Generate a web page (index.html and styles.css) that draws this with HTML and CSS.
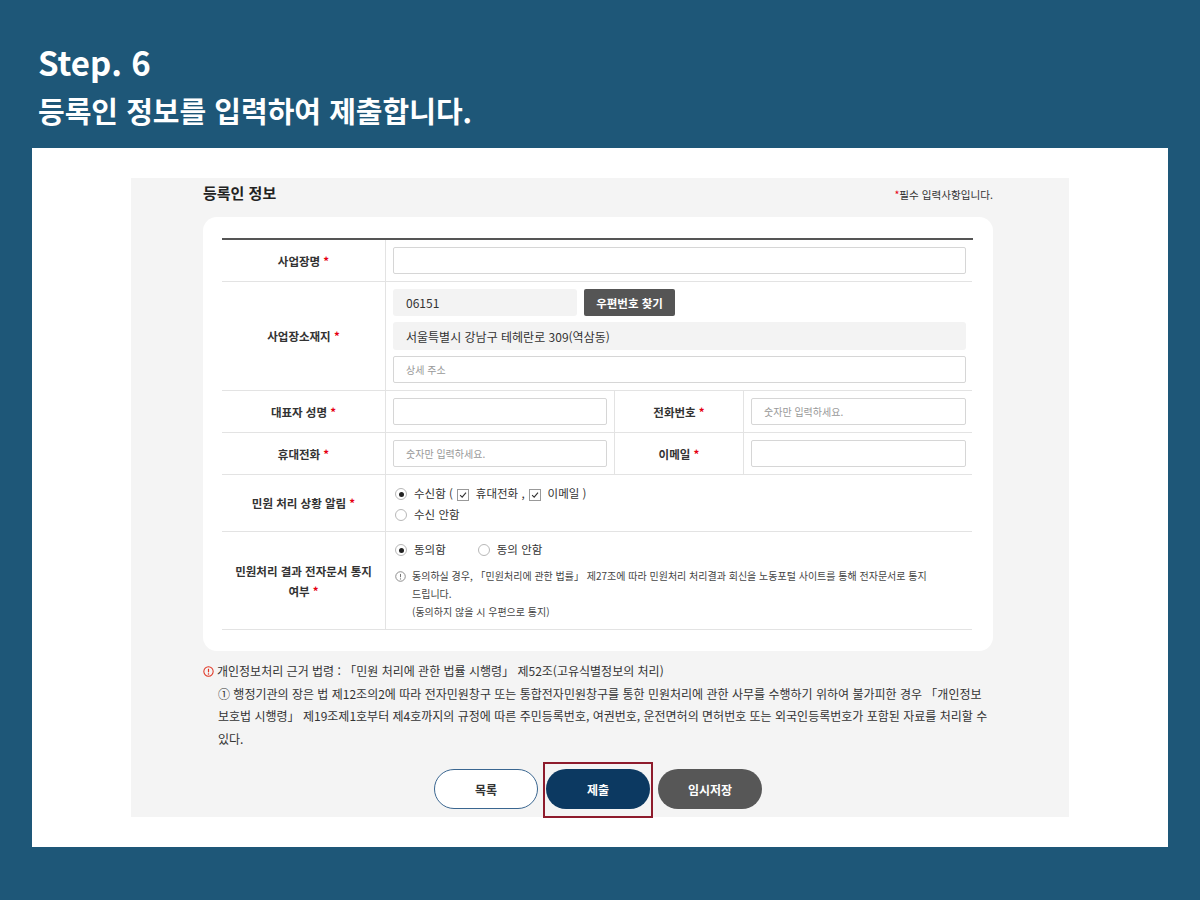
FILE: index.html
```html
<!DOCTYPE html>
<html lang="ko">
<head>
<meta charset="utf-8">
<title>Step 6</title>
<link rel="stylesheet" href="styles.css">
</head>
<body>
<div class="page">
  <header class="hero">
    <p class="step">Step. 6</p>
    <h1 class="headline">등록인 정보를 입력하여 제출합니다.</h1>
  </header>
  <main class="panel">
    <section class="inner">
      <div class="title-row">
        <h2 class="title">등록인 정보</h2>
        <p class="req-note"><span class="star">*</span>필수 입력사항입니다.</p>
      </div>
      <div class="card">
        <div class="form-grid">
          <div class="lbl"><span>사업장명 <span class="star">*</span></span></div>
          <div class="val span3"><div class="input"></div></div>

          <div class="lbl"><span>사업장소재지 <span class="star">*</span></span></div>
          <div class="val span3 addr">
            <div class="zip-row">
              <div class="zip">06151</div>
              <button class="zip-btn" type="button">우편번호 찾기</button>
            </div>
            <div class="addr-fixed">서울특별시 강남구 테헤란로 309(역삼동)</div>
            <div class="input">상세 주소</div>
          </div>

          <div class="lbl"><span>대표자 성명 <span class="star">*</span></span></div>
          <div class="val mid-val"><div class="input"></div></div>
          <div class="lbl mid"><span>전화번호 <span class="star">*</span></span></div>
          <div class="val"><div class="input">숫자만 입력하세요.</div></div>

          <div class="lbl"><span>휴대전화 <span class="star">*</span></span></div>
          <div class="val mid-val"><div class="input">숫자만 입력하세요.</div></div>
          <div class="lbl mid"><span>이메일 <span class="star">*</span></span></div>
          <div class="val"><div class="input"></div></div>

          <div class="lbl"><span>민원 처리 상황 알림 <span class="star">*</span></span></div>
          <div class="val span3 opts notify">
            <p class="opt-line"><span class="radio on"></span>수신함 (<span class="check"><svg viewBox="0 0 12 12" width="10" height="10"><path d="M2.5 6.2 L5 8.6 L9.6 3.2" fill="none" stroke="#333" stroke-width="1.3"/></svg></span>휴대전화 ,<span class="check"><svg viewBox="0 0 12 12" width="10" height="10"><path d="M2.5 6.2 L5 8.6 L9.6 3.2" fill="none" stroke="#333" stroke-width="1.3"/></svg></span>이메일 )</p>
            <p class="opt-line"><span class="radio"></span>수신 안함</p>
          </div>

          <div class="lbl"><span>민원처리 결과 전자문서 통지<br>여부 <span class="star">*</span></span></div>
          <div class="val span3 opts consent">
            <p class="opt-line"><span class="radio on"></span>동의함<span class="radio gap"></span>동의 안함</p>
            <div class="info">
              <svg class="info-ico" viewBox="0 0 12 12" width="11" height="11"><circle cx="6" cy="6" r="5.2" fill="none" stroke="#777" stroke-width="0.9"/><path d="M6 3.2 V6.8" stroke="#777" stroke-width="1.1"/><circle cx="6" cy="8.6" r="0.7" fill="#777"/></svg>
              <div class="info-text">
                <p>동의하실 경우, 「민원처리에 관한 법률」 제27조에 따라 민원처리 처리결과 회신을 노동포털 사이트를 통해 전자문서로 통지</p>
                <p>드립니다.</p>
                <p>(동의하지 않을 시 우편으로 통지)</p>
              </div>
            </div>
          </div>
        </div>
      </div>

      <div class="notes">
        <p class="notes-head">
          <svg class="warn-ico" viewBox="0 0 12 12" width="11" height="11"><circle cx="6" cy="6" r="5.1" fill="none" stroke="#e0301e" stroke-width="1.1"/><path d="M6 3 V6.9" stroke="#e0301e" stroke-width="1.3"/><circle cx="6" cy="8.8" r="0.8" fill="#e0301e"/></svg>
          <span>개인정보처리 근거 법령 : 「민원 처리에 관한 법률 시행령」 제52조(고유식별정보의 처리)</span>
        </p>
        <p class="notes-body">① 행정기관의 장은 법 제12조의2에 따라 전자민원창구 또는 통합전자민원창구를 통한 민원처리에 관한 사무를 수행하기 위하여 불가피한 경우 「개인정보 보호법 시행령」 제19조제1호부터 제4호까지의 규정에 따른 주민등록번호, 여권번호, 운전면허의 면허번호 또는 외국인등록번호가 포함된 자료를 처리할 수 있다.</p>
      </div>

      <div class="actions">
        <button class="btn btn-list" type="button">목록</button>
        <span class="highlight"><button class="btn btn-submit" type="button">제출</button></span>
        <button class="btn btn-temp" type="button">임시저장</button>
      </div>
    </section>
  </main>
</div>
</body>
</html>
```
FILE: styles.css
```css
* { box-sizing: border-box; margin: 0; padding: 0; }

body {
  margin: 0;
  background: #1e5778;
  font-family: "Noto Sans CJK KR", "Noto Sans", sans-serif;
  color: #333;
}

.page { width: 1200px; height: 900px; }

.hero {
  height: 148px;
  padding: 38px 0 0 38px;
  color: #fff;
}

.step {
  font-size: 33px;
  font-weight: 700;
  line-height: 48px;
}

.headline {
  font-size: 29px;
  font-weight: 700;
  line-height: 48px;
  letter-spacing: 0;
}

.panel {
  margin: 0 32px;
  background: #fff;
  height: 699px;
  padding: 30px 99px;
}

.inner {
  background: #f4f4f4;
  height: 639px;
  padding: 0 76px 0 72px;
}

.title-row {
  display: flex;
  justify-content: space-between;
  align-items: baseline;
  height: 39px;
  padding-top: 5px;
}

.title {
  font-size: 15px;
  font-weight: 700;
  color: #222;
  line-height: 20px;
}

.req-note { font-size: 10.6px; color: #333; }

.star { color: #e60012; }

.card {
  background: #fff;
  border-radius: 14px;
  padding: 21px 20px 21px 19px;
}

.form-grid {
  display: grid;
  grid-template-columns: 164px 228px 130px 228px;
  border-top: 2px solid #555;
}

.lbl {
  display: flex;
  align-items: center;
  justify-content: center;
  text-align: center;
  font-size: 11.5px;
  font-weight: 700;
  color: #333;
  line-height: 20px;
  border-right: 1px solid #e3e3e3;
  border-bottom: 1px solid #e3e3e3;
}

.lbl.mid { border-left: 1px solid #e3e3e3; }

.val {
  padding: 7px 6px 7px 7px;
  border-bottom: 1px solid #e3e3e3;
}

.mid-val { padding-right: 7px; }

.span3 { grid-column: span 3; }

.input {
  height: 27px;
  border: 1px solid #d6d6d6;
  border-radius: 2px;
  background: #fff;
  font-size: 10px;
  color: #999;
  padding-left: 12px;
  display: flex;
  align-items: center;
}

.addr { display: flex; flex-direction: column; gap: 6px; }

.zip-row { display: flex; gap: 7px; }

.zip, .addr-fixed {
  background: #f3f3f3;
  border-radius: 3px;
  font-size: 12px;
  color: #333;
  padding-left: 13px;
  display: flex;
  align-items: center;
}

.zip { width: 184px; height: 27px; }
.addr-fixed { height: 28px; }

.zip-btn {
  width: 91px;
  height: 27px;
  background: #555;
  color: #fff;
  border: 0;
  border-radius: 2px;
  font-family: inherit;
  font-size: 11.5px;
  font-weight: 700;
}

.opts { font-size: 11.5px; color: #333; }

.notify { padding: 8px 8px 6px 9px; }
.consent { padding: 7px 8px 8px 9px; }

.opt-line {
  height: 21px;
  line-height: 21px;
  white-space: nowrap;
}

.radio {
  display: inline-block;
  width: 12px;
  height: 12px;
  border: 1px solid #b8b8b8;
  border-radius: 50%;
  background: #fff;
  position: relative;
  margin-right: 7px;
  vertical-align: -2px;
}

.radio.on::after {
  content: "";
  position: absolute;
  inset: 2.5px;
  border-radius: 50%;
  background: #222;
}

.radio.gap { margin-left: 32px; }

.check {
  display: inline-flex;
  width: 12px;
  height: 12px;
  border: 1px solid #999;
  background: #fff;
  align-items: center;
  justify-content: center;
  margin: 0 7px 0 4px;
  vertical-align: -2px;
}

.info {
  display: flex;
  gap: 6px;
  margin-top: 7px;
}

.info-ico { flex: none; margin-top: 4px; }

.info-text {
  font-size: 10px;
  line-height: 18px;
  color: #444;
}

.notes {
  margin-top: 9px;
  font-size: 12px;
  line-height: 22.5px;
  color: #333;
}

.notes-head { display: flex; align-items: center; gap: 3px; }

.warn-ico { flex: none; }

.notes-body { padding-left: 15px; }

.actions {
  display: flex;
  justify-content: center;
  gap: 8px;
  margin-top: 19px;
}

.btn {
  width: 104px;
  height: 40px;
  border-radius: 20px;
  font-family: inherit;
  font-size: 12px;
  font-weight: 700;
  border: 1px solid transparent;
}

.btn-list { background: #fff; border-color: #3a6690; color: #333; }
.btn-submit { background: #0c3961; color: #fff; }
.btn-temp { background: #575757; color: #fff; }

.highlight { position: relative; display: flex; }

.highlight::after {
  content: "";
  position: absolute;
  inset: -7px -3px -9px -3px;
  border: 2px solid #8e1b2c;
  pointer-events: none;
}
```
